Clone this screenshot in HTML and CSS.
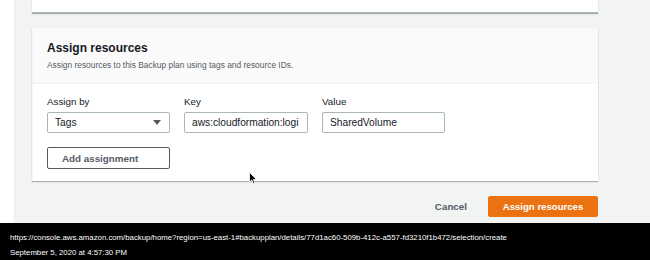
FILE: index.html
```html
<!DOCTYPE html>
<html lang="en">
<head>
    <meta charset="UTF-8">
    <meta name="viewport" content="width=device-width, initial-scale=1.0">
    <title>Assign resources</title>
    <link rel="stylesheet" href="styles.css">
</head>
<body>
    <div class="screen">
        <aside class="sidebar"></aside>
        <main class="content">
            <div class="card-top"></div>

            <section class="panel">
                <header class="panel-header">
                    <h2>Assign resources</h2>
                    <p>Assign resources to this Backup plan using tags and resource IDs.</p>
                </header>
                <div class="panel-body">
                    <div class="fields">
                        <div class="field">
                            <label>Assign by</label>
                            <div class="select">
                                <span>Tags</span>
                                <svg width="8" height="5" viewBox="0 0 8 5"><path d="M0 0h8L4 5z" fill="#545b64"/></svg>
                            </div>
                        </div>
                        <div class="field">
                            <label>Key</label>
                            <div class="input">aws:cloudformation:logi</div>
                        </div>
                        <div class="field">
                            <label>Value</label>
                            <div class="input">SharedVolume</div>
                        </div>
                    </div>
                    <button class="btn-normal">Add assignment</button>
                </div>
            </section>

            <div class="actions">
                <button class="btn-link">Cancel</button>
                <button class="btn-primary">Assign resources</button>
            </div>
        </main>
        <svg class="cursor" width="8" height="12" viewBox="0 0 8 12">
            <path d="M0.5 0.5v9.5l2.3-2.1 1.5 3.5 1.5-0.6-1.5-3.4h3.1z" fill="#000" stroke="#fff" stroke-width="0.8"/>
        </svg>
    </div>
    <footer class="capture">
        <div>https://console.aws.amazon.com/backup/home?region=us-east-1#backupplan/details/77d1ac60-509b-412c-a557-fd3210f1b472/selection/create</div>
        <div>September 5, 2020 at 4:57:30 PM</div>
    </footer>
</body>
</html>
```

FILE: styles.css
```css
body {
    margin: 0;
    width: 650px;
    height: 260px;
    overflow: hidden;
    font-family: "Liberation Sans", Arial, sans-serif;
    color: #16191f;
    background-color: #f2f3f3;
}

.screen {
    position: relative;
    display: flex;
    height: 223px;
}

.sidebar {
    width: 14px;
    background-color: #fff;
    border-right: 1px dotted #d5dbdb;
}

.content {
    flex: 1;
    padding: 0 52px 0 17px;
}

.card-top {
    height: 12px;
    background-color: #fff;
    border-bottom: 1px solid #aab7b8;
    box-shadow: 0 1px 1px rgba(0, 28, 36, 0.3);
}

.panel {
    margin-top: 15px;
    background-color: #fff;
    border-left: 1px dotted #eaeded;
    box-shadow: 0 1px 1px 0 rgba(0, 28, 36, 0.3);
}

.panel-header {
    background-color: #fafafa;
    padding: 12px 14px 12px;
    border-bottom: 1px dotted #eaeded;
}

.panel-header h2 {
    margin: 0;
    font-size: 12px;
    line-height: 16px;
    font-weight: bold;
}

.panel-header p {
    margin: 3px 0 0;
    font-size: 8.4px;
    line-height: 12px;
    color: #545b64;
}

.panel-body {
    padding: 11px 14px 12px;
}

.fields {
    display: grid;
    grid-template-columns: 123px 124px 123px;
    column-gap: 14px;
}

.field label {
    display: block;
    font-size: 9.8px;
    line-height: 14px;
    margin-bottom: 3px;
}

.select, .input {
    box-sizing: border-box;
    height: 21px;
    border: 1px solid #aab7b8;
    border-radius: 2px;
    font-size: 10.2px;
    line-height: 19px;
    padding: 0 7px;
    white-space: nowrap;
    overflow: hidden;
}

.select {
    display: flex;
    justify-content: space-between;
    align-items: center;
    padding-right: 8px;
}

.btn-normal {
    margin-top: 14px;
    box-sizing: border-box;
    width: 123px;
    height: 22px;
    padding: 0 0 0 14px;
    text-align: left;
    background-color: #fff;
    border: 1px solid #545b64;
    border-radius: 2px;
    font-family: inherit;
    font-size: 9.8px;
    font-weight: bold;
    color: #545b64;
}

.actions {
    display: flex;
    justify-content: flex-end;
    align-items: center;
    margin-top: 15px;
}

.btn-link {
    margin-right: 21px;
    padding: 0;
    border: none;
    background: none;
    font-family: inherit;
    font-size: 9.8px;
    font-weight: bold;
    color: #545b64;
}

.btn-primary {
    box-sizing: border-box;
    width: 110px;
    height: 21px;
    padding: 0;
    background-color: #ec7211;
    border: 1px solid #ec7211;
    border-radius: 2px;
    font-family: inherit;
    font-size: 9.6px;
    font-weight: bold;
    color: #fff;
}

.cursor {
    position: absolute;
    left: 249px;
    top: 172px;
}

.capture {
    height: 37px;
    box-sizing: border-box;
    padding: 7px 10px 0;
    background-color: #000;
    color: #fff;
    font-size: 7.8px;
    line-height: 15px;
}
```
